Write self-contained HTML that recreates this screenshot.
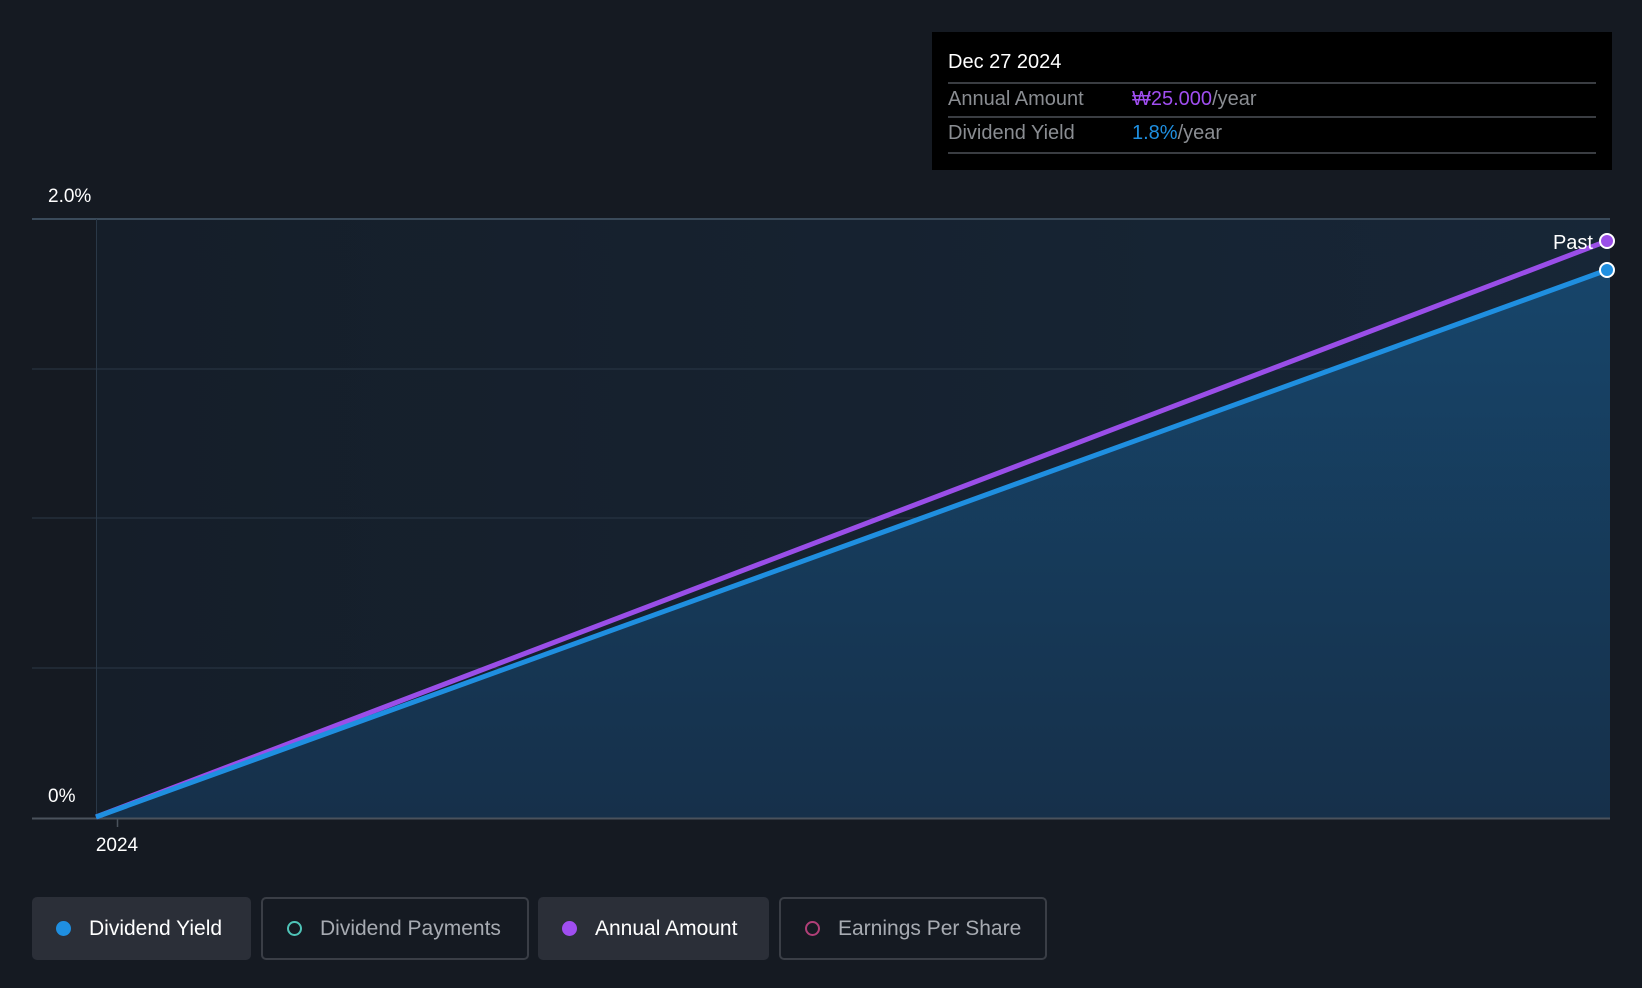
<!DOCTYPE html>
<html><head><meta charset="utf-8"><style>
body{margin:0;width:1642px;height:988px;background:#151a22;font-family:"Liberation Sans",sans-serif;overflow:hidden;position:relative}
.t{position:absolute;background:#000;left:932px;top:32px;width:680px;height:138px}
.t div{position:absolute;left:16px;font-size:20px;white-space:nowrap}
.sep{position:absolute;left:16px;width:648px;height:2px;background:#3a3d42}
.lg{position:absolute;top:897px;height:63px;border-radius:5px;box-sizing:border-box;font-size:21px;display:flex;align-items:center;padding-left:24px}
.dot{width:15px;height:15px;border-radius:50%;margin-right:18px;box-sizing:border-box}
</style></head><body>
<svg width="1642" height="988" style="position:absolute;left:0;top:0">
<defs><linearGradient id="bg" x1="0" x2="1"><stop offset="0" stop-color="#151e29"/><stop offset="1" stop-color="#172637"/></linearGradient>
<linearGradient id="ar" x1="0" y1="0" x2="0" y2="1"><stop offset="0" stop-color="#17456a"/><stop offset="1" stop-color="#16304a"/></linearGradient></defs>
<rect x="96" y="219" width="1514" height="599" fill="url(#bg)"/>
<line x1="32" y1="219" x2="1610" y2="219" stroke="#3a4a5a" stroke-width="2"/>
<line x1="32" y1="369" x2="1610" y2="369" stroke="#2a3847" stroke-width="1"/>
<line x1="32" y1="518" x2="1610" y2="518" stroke="#2a3847" stroke-width="1"/>
<line x1="32" y1="668" x2="1610" y2="668" stroke="#2a3847" stroke-width="1"/>
<line x1="96.5" y1="219" x2="96.5" y2="818" stroke="#2a3847" stroke-width="1"/>
<polygon points="96,817 1607,270 1610,270 1610,818 96,818" fill="url(#ar)"/>
<line x1="32" y1="818.5" x2="1610" y2="818.5" stroke="#4a525c" stroke-width="2"/>
<line x1="117.5" y1="819" x2="117.5" y2="827" stroke="#4a525c" stroke-width="1.5"/>
<line x1="96" y1="817" x2="1607" y2="241" stroke="#9a4ee8" stroke-width="5"/>
<line x1="96" y1="817" x2="1607" y2="270" stroke="#1f8fe0" stroke-width="5"/>
<circle cx="1607" cy="241" r="7" fill="#9a4ee8" stroke="#fff" stroke-width="2"/>
<circle cx="1607" cy="270" r="7" fill="#1f8fe0" stroke="#fff" stroke-width="2"/>
<text x="1593" y="249" fill="#fff" font-size="20" text-anchor="end" font-family="Liberation Sans">Past</text>
<text x="48" y="202" fill="#fff" font-size="19" font-family="Liberation Sans">2.0%</text>
<text x="48" y="802" fill="#fff" font-size="19" font-family="Liberation Sans">0%</text>
<text x="117" y="851" fill="#fff" font-size="19" text-anchor="middle" font-family="Liberation Sans">2024</text>
</svg>
<div class="t">
<div style="top:19px;color:#fff">Dec 27 2024</div>
<div class="sep" style="top:50px"></div>
<div style="top:56px;color:#8a8d92">Annual Amount</div>
<div style="top:56px;left:200px;color:#8a8d92"><span style="color:#a04ef0">₩25.000</span>/year</div>
<div class="sep" style="top:84px"></div>
<div style="top:90px;color:#8a8d92">Dividend Yield</div>
<div style="top:90px;left:200px;color:#8a8d92"><span style="color:#1f8fe0">1.8%</span>/year</div>
<div class="sep" style="top:120px"></div>
</div>
<div class="lg" style="left:32px;width:219px;background:#2b2f38;color:#fff"><div class="dot" style="background:#1f8fe0"></div>Dividend Yield</div>
<div class="lg" style="left:261px;width:268px;border:2px solid #3a3e46;color:#a7abb2"><div class="dot" style="border:2px solid #4fc4b8"></div>Dividend Payments</div>
<div class="lg" style="left:538px;width:231px;background:#2b2f38;color:#fff"><div class="dot" style="background:#a04ef0"></div>Annual Amount</div>
<div class="lg" style="left:779px;width:268px;border:2px solid #3a3e46;color:#a7abb2"><div class="dot" style="border:2px solid #b03f78"></div>Earnings Per Share</div>
</body></html>
